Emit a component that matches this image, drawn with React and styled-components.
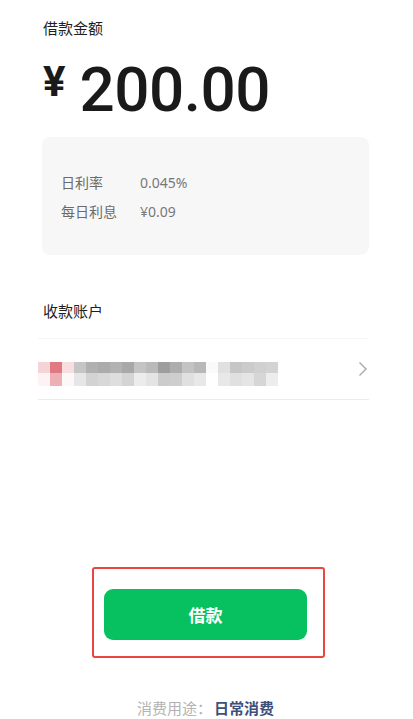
import React from "react";
import styled, { createGlobalStyle } from "styled-components";

const Global = createGlobalStyle`
  html, body { margin: 0; padding: 0; background: #fff; }
  body { font-family: "Noto Sans CJK SC", "Noto Sans", sans-serif; }
`;

const Page = styled.div`
  width: 413px;
  height: 719px;
  box-sizing: border-box;
  padding: 0 44px 0 42px;
  display: flex;
  flex-direction: column;
  overflow: hidden;
`;

const Label = styled.div`
  font-size: 15px;
  line-height: 21px;
  color: #1f1f1f;
  margin-top: ${(p) => p.$top}px;
  padding-left: 1px;
`;

const Amount = styled.div`
  display: flex;
  align-items: flex-start;
  margin-top: 21px;
  height: 62px;
  color: #1a1a1a;
  font-family: Roboto, "Noto Sans", sans-serif;
`;

const Yen = styled.span`
  font-size: 42px;
  font-weight: 700;
  line-height: 1;
  margin-top: 2px;
  margin-left: 1px;
  margin-right: 14px;
`;

const Digits = styled.span`
  font-size: 62px;
  font-weight: 500;
  line-height: 1;
  letter-spacing: -0.5px;
`;

const Card = styled.div`
  margin-top: 16px;
  height: 118px;
  background: #f7f7f7;
  border-radius: 8px;
  box-sizing: border-box;
  padding: 35px 19px 0;
  display: flex;
  flex-direction: column;
  gap: 8px;
`;

const InfoRow = styled.div`
  display: flex;
  font-size: 14px;
  line-height: 21px;
  color: #6b6b6b;
`;

const InfoKey = styled.span`
  width: 79px;
`;

const InfoVal = styled.span`
  font-family: "Noto Sans", sans-serif;
  color: #777;
`;

const AccountRow = styled.div`
  margin-top: 17px;
  height: 62px;
  box-sizing: border-box;
  border-top: 1px solid #f5f5f5;
  border-bottom: 1px solid #ececec;
  display: flex;
  align-items: center;
  justify-content: space-between;
  margin-left: -4px;
`;

const MosaicBox = styled.div`
  margin-top: 10px;
`;

const Mosaic = styled.div`
  display: grid;
  grid-template-columns: repeat(20, 12px);
  grid-auto-rows: ${(p) => p.$h}px;
`;

const Cell = styled.div`
  background: ${(p) => p.$c};
`;

const Chevron = styled.svg`
  width: 10px;
  height: 16px;
  margin-right: 1px;
`;

const ActionArea = styled.div`
  margin-top: 167px;
  margin-left: 50px;
  width: 233px;
  height: 91px;
  box-sizing: border-box;
  border: 2px solid #e8473d;
  border-radius: 3px;
  padding: 20px 0 0 10px;
`;

const BorrowButton = styled.button`
  display: block;
  width: 203px;
  height: 51px;
  border: none;
  border-radius: 9px;
  background: #07c160;
  color: #fff;
  font-family: "Noto Sans CJK SC", sans-serif;
  font-size: 17px;
  font-weight: 700;
  cursor: pointer;
`;

const Footer = styled.div`
  margin-top: 40px;
  font-size: 15px;
  line-height: 20px;
  color: #b3b3b3;
  padding-left: 95px;
`;

const Purpose = styled.span`
  color: #3d4f7b;
  font-weight: 700;
  margin-left: 2px;
`;

const row1 = ["#f5d4d7","#e07a80","#f7dfe1","#c5c5c5","#b0b0b0","#ababab","#b2b2b2","#a8a8a8","#c4c4c4","#bababa","#9e9e9e","#adadad","#c3c3c3","#b8b8b8","#fafafa","#e0e0e0","#c6c6c6","#cbcbcb","#d0d0d0","#d3d3d3"];
const row2 = ["#fdf3f4","#ecb0b5","#fef7f7","#e6e6e6","#d3d3d3","#d8d8d8","#dedede","#d4d4d4","#ececec","#e4e4e4","#cccccc","#cecece","#e0e0e0","#e8e8e8","#ffffff","#e8e8e8","#e0e0e0","#e5e5e5","#d6d6d6","#ededed"];

export default function App() {
  return (
    <>
      <Global />
      <Page>
        <Label $top={17}>借款金额</Label>
        <Amount>
          <Yen>¥</Yen>
          <Digits>200.00</Digits>
        </Amount>
        <Card>
          <InfoRow>
            <InfoKey>日利率</InfoKey>
            <InfoVal>0.045%</InfoVal>
          </InfoRow>
          <InfoRow>
            <InfoKey>每日利息</InfoKey>
            <InfoVal>¥0.09</InfoVal>
          </InfoRow>
        </Card>
        <Label $top={45}>收款账户</Label>
        <AccountRow>
          <MosaicBox>
            <Mosaic $h={11}>
              {row1.map((c, i) => <Cell key={"a" + i} $c={c} />)}
            </Mosaic>
            <Mosaic $h={13}>
              {row2.map((c, i) => <Cell key={"b" + i} $c={c} />)}
            </Mosaic>
          </MosaicBox>
          <Chevron viewBox="0 0 10 16">
            <path d="M1.5 1.5 L8 8 L1.5 14.5" fill="none" stroke="#a8a8a8" strokeWidth="1.4" />
          </Chevron>
        </AccountRow>
        <ActionArea>
          <BorrowButton>借款</BorrowButton>
        </ActionArea>
        <Footer>
          消费用途：<Purpose>日常消费</Purpose>
        </Footer>
      </Page>
    </>
  );
}
